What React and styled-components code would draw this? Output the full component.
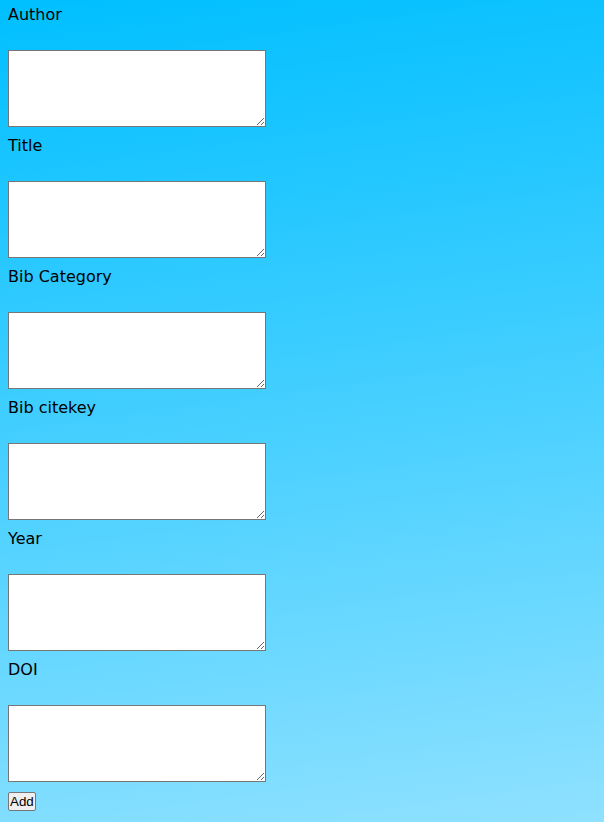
import React from 'react'
import styled, { createGlobalStyle } from 'styled-components'

const GlobalStyle = createGlobalStyle`
  html, body {
    margin: 0;
    padding: 0;
  }
  body {
    min-height: 822px;
    background: linear-gradient(172deg, #00bfff 0%, #45cfff 50%, #8fe1ff 100%);
    font-family: "DejaVu Sans", sans-serif;
    color: #000;
  }
`

const Form = styled.form`
  display: flex;
  flex-direction: column;
  align-items: flex-start;
  padding: 5px 8px 12px;
`

const Field = styled.div`
  display: flex;
  flex-direction: column;
  align-items: flex-start;
  margin-bottom: ${props => (props.last ? '10px' : '9px')};
`

const Label = styled.label`
  font-size: 16px;
  line-height: 19px;
  margin-bottom: 26px;
`

const Area = styled.textarea`
  box-sizing: border-box;
  width: 258px;
  height: 77px;
  margin: 0;
  padding: 2px;
  border: 1px solid #767676;
  background: #fff;
  font-family: "Liberation Mono", monospace;
  font-size: 13px;
`

const AddButton = styled.button`
  box-sizing: border-box;
  height: 19px;
  padding: 1px 1px;
  border: 1px solid #767676;
  border-radius: 2px;
  background: #efefef;
  color: #000;
  font-family: "Liberation Sans", Arial, sans-serif;
  font-size: 13.33px;
  line-height: 15px;
`

const fields = ['Author', 'Title', 'Bib Category', 'Bib citekey', 'Year', 'DOI']

export default function App() {
  return (
    <>
      <GlobalStyle />
      <Form onSubmit={e => e.preventDefault()}>
        {fields.map((name, i) => (
          <Field key={name} last={i === fields.length - 1}>
            <Label htmlFor={`f${i}`}>{name}</Label>
            <Area id={`f${i}`} />
          </Field>
        ))}
        <AddButton type="submit">Add</AddButton>
      </Form>
    </>
  )
}
